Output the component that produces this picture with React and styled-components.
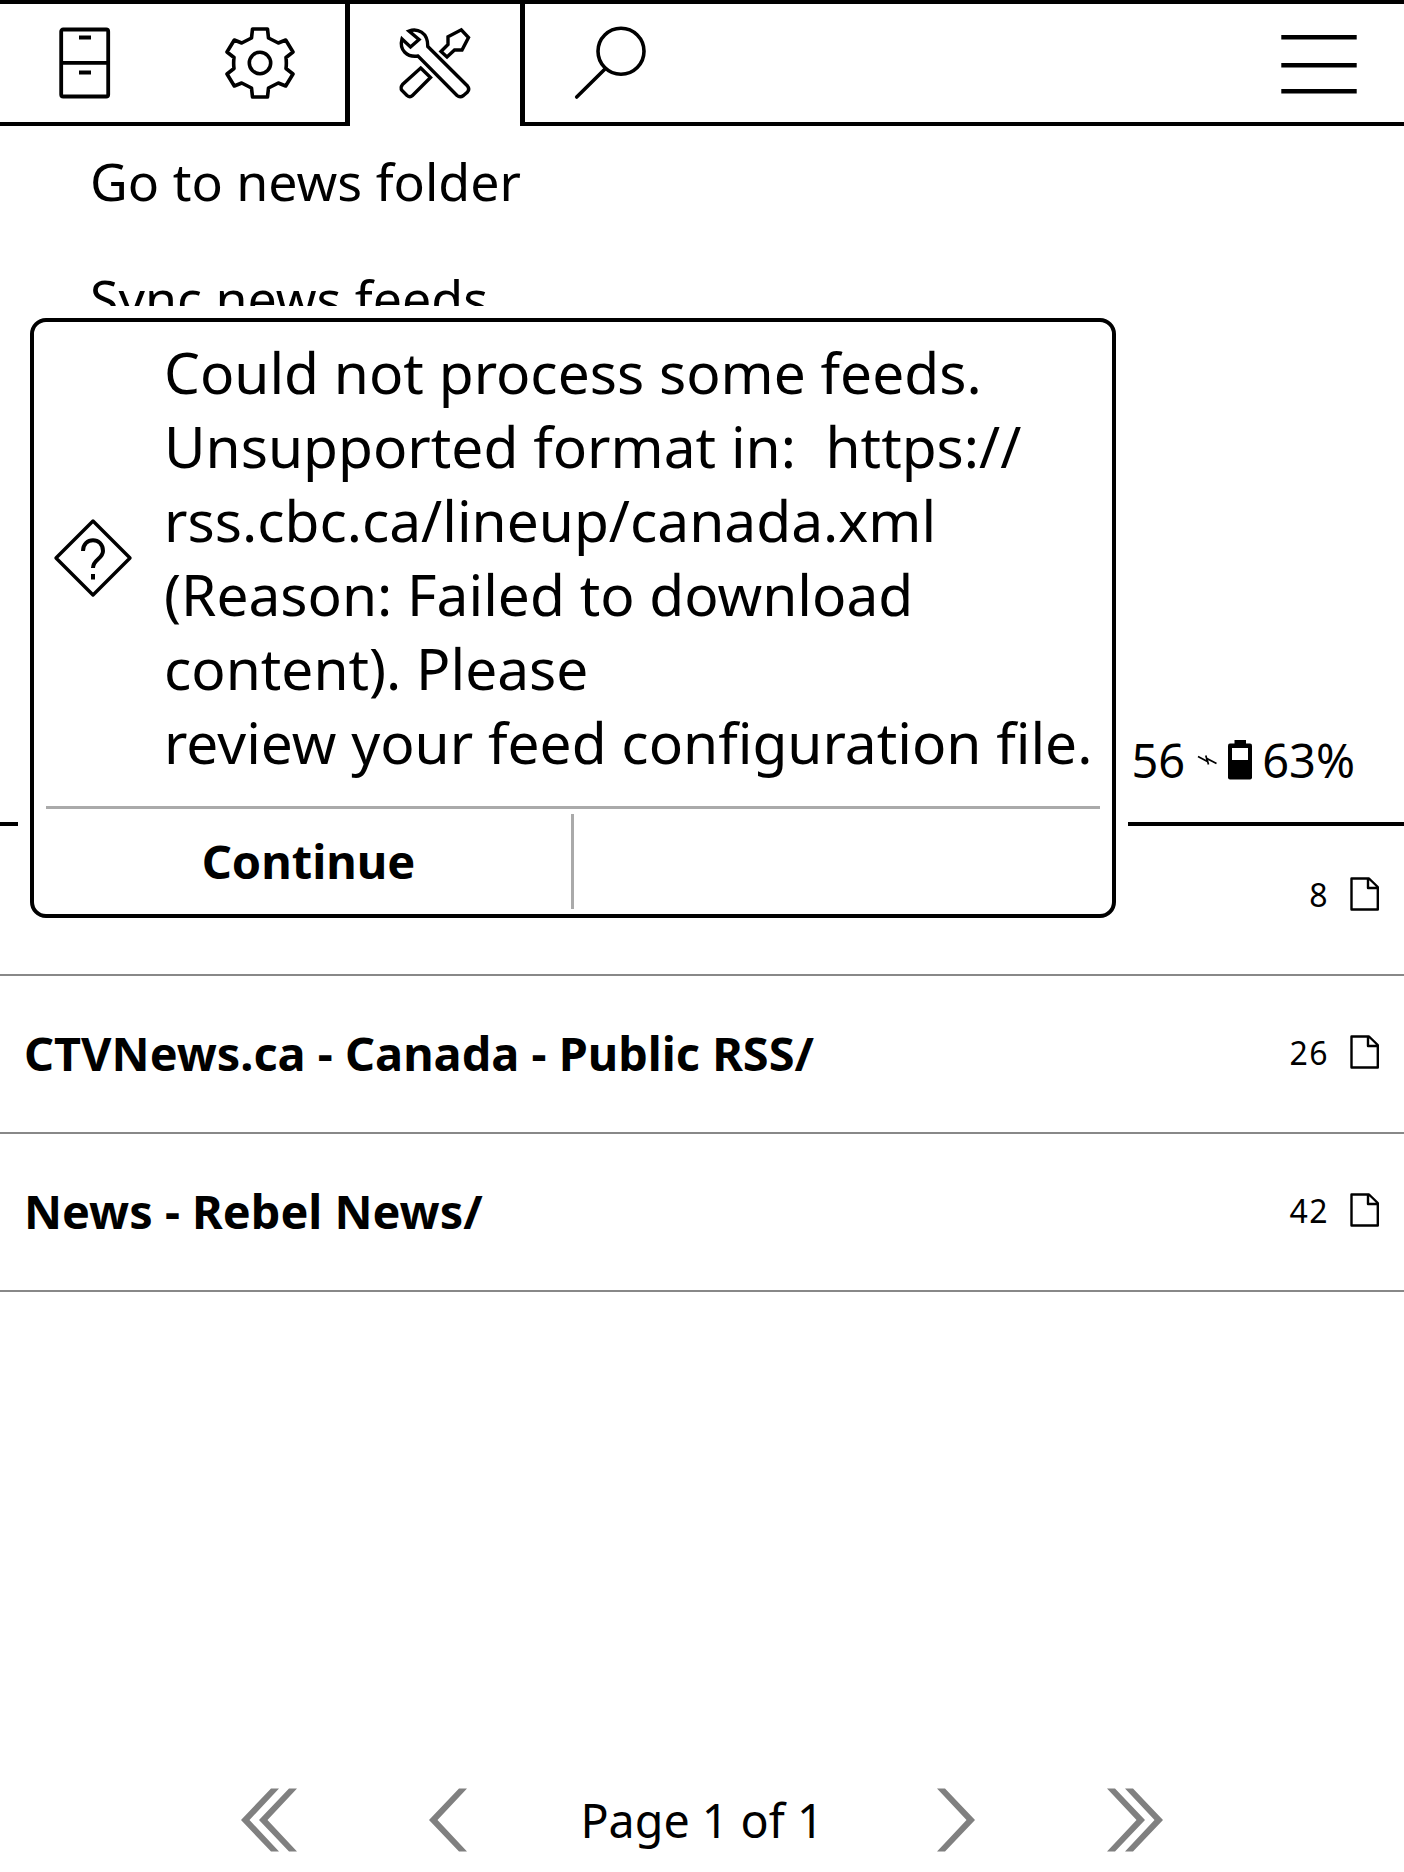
import React from "react";
import styled, { createGlobalStyle } from "styled-components";

const GlobalStyle = createGlobalStyle`
  * { box-sizing: border-box; }
  body { margin: 0; background: #fff; color: #000; font-family: "Noto Sans", sans-serif; }
`;

const Screen = styled.main`
  position: relative;
  display: flex;
  flex-direction: column;
  width: 1404px;
  height: 1872px;
  overflow: hidden;
  background: #fff;
`;

const TabBar = styled.nav`
  display: flex;
  flex: none;
  height: 126px;
  border-top: 4px solid #000;
`;

const Tab = styled.div`
  display: flex;
  flex: none;
  align-items: center;
  justify-content: center;
  width: ${(p) => p.$width}px;
  margin-left: ${(p) => (p.$active ? -5 : 0)}px;
  padding-bottom: ${(p) => (p.$active ? 4 : 0)}px;
  border: 0 solid #000;
  border-width: ${(p) => (p.$active ? "0 5px" : "0 0 4px")};
`;

const TabSpacer = styled.div`
  flex: 1;
  border-bottom: 4px solid #000;
`;

const Svg = styled.svg`
  display: block;
  flex: none;
  overflow: visible;
`;

const MenuList = styled.ul`
  flex: none;
  height: 696px;
  margin: 0;
  padding: 0;
  list-style: none;
`;

const MenuItem = styled.li`
  display: flex;
  align-items: center;
  height: 117px;
  padding: 0 0 6px 90px;
  font-size: 51.9px;
  line-height: 1;
`;

const MenuFooter = styled.li`
  display: flex;
  align-items: center;
  justify-content: flex-end;
  height: 120px;
  margin-top: 342px;
  padding: 0 49px 4px 0;
  font-size: 47px;
  line-height: 1;
`;

const StatusIcons = styled.span`
  display: flex;
  align-items: center;
  gap: 11px;
  margin: 0 10px 0 12px;
`;

const Files = styled.section`
  flex: none;
  border-top: 4px solid #000;
`;

const FileRow = styled.div`
  display: flex;
  align-items: center;
  height: 158px;
  padding: 0 25px 0 24px;
  border-bottom: 2px solid #888;

  &:first-child {
    margin-top: -8px;
  }
`;

const FileName = styled.span`
  flex: 1;
  padding-bottom: 2px;
  font-size: 46.85px;
  font-weight: 700;
  line-height: 1;
`;

const FileMeta = styled.span`
  display: flex;
  align-items: center;
  gap: 20px;
  padding-bottom: 4px;
`;

const FileCount = styled.span`
  padding-top: 2px;
  font-size: 32px;
  letter-spacing: 1.5px;
  line-height: 1;
`;

const Pager = styled.footer`
  display: flex;
  align-items: center;
  justify-content: space-between;
  width: 922px;
  height: 64px;
  margin: auto auto 20px;
`;

const PagerGroup = styled.div`
  display: flex;
  gap: 132px;
`;

const PageLabel = styled.span`
  font-size: 46.6px;
  line-height: 1;
  white-space: nowrap;
`;

const DialogMask = styled.div`
  position: absolute;
  left: 18px;
  top: 306px;
  width: 1110px;
  height: 624px;
  padding: 12px;
  background: #fff;
`;

const Dialog = styled.div`
  display: flex;
  flex-direction: column;
  height: 600px;
  padding: 0 12px;
  border: 4px solid #000;
  border-radius: 16px;
`;

const DialogBody = styled.div`
  display: flex;
  align-items: center;
  height: 484px;
  padding: 0 0 12px 8px;
`;

const Message = styled.p`
  margin: 0 0 2px 32px;
  font-size: 56.85px;
  line-height: 74px;
  white-space: pre;
`;

const ButtonRow = styled.div`
  display: flex;
  flex: 1;
  border-top: 3px solid #aaa;
`;

const DialogButton = styled.div`
  display: flex;
  align-items: center;
  justify-content: center;
  width: 525px;
  font-size: 47px;
  font-weight: 700;
  line-height: 1;
`;

const ButtonDivider = styled.div`
  width: 3px;
  margin: 5px 0;
  background: #aaa;
`;

const CabinetIcon = () => (
  <Svg width="72" height="72" viewBox="0 0 72 72" fill="none" stroke="#000" strokeWidth="3.8">
    <rect x="12.2" y="2.5" width="47" height="67" rx="2" />
    <path d="M12 35.8H60M30 10.5H42M30 45.5H42" />
  </Svg>
);

const GearIcon = () => (
  <Svg width="72" height="72" viewBox="0 0 72 72" fill="none" stroke="#000" strokeWidth="3.6" strokeLinejoin="round">
    <path d="M28.5 2H43.5L44.5 11L54.3 16L61.7 13L69 25L62 30.5Q62.7 36 62 41.5L69 47L61.7 59L54.3 56L44.5 61L43.5 70H28.5L27.5 61L17.7 56L10.3 59L3 47L10 41.5Q9.3 36 10 30.5L3 25L10.3 13L17.7 16L27.5 11Z" />
    <circle cx="36" cy="36" r="10.7" />
  </Svg>
);

const ToolsIcon = () => (
  <Svg width="72" height="72" viewBox="0 0 72 72" fill="none" stroke="#000" strokeWidth="3.4">
    <path d="M3 12L11.5 20L20 12.5L10 4C18 1 29 5 28.8 19.5L68.5 59Q71 62 68.5 65L64.5 68.5Q61 71 58 68.5L19 29C8 30.5 0 23 3 12Z" />
    <path d="M21.7 41L31.5 50.5L13.5 68.5Q11 71 8 68.5L3 63.5Q1 60.5 3.5 57.5ZM42 24.5L49 17.5V9.7L62.3 2.8L69.5 10.5L63 23H55.5L48 30Z" />
  </Svg>
);

const SearchIcon = () => (
  <Svg width="72" height="72" viewBox="0 0 72 72" fill="none" stroke="#000" strokeWidth="3.6" strokeLinecap="round">
    <circle cx="46" cy="24.3" r="23" />
    <path d="M1.7 70L30 42" />
  </Svg>
);

const MenuIcon = () => (
  <Svg width="76" height="72" viewBox="0 0 76 72" fill="none" stroke="#000" strokeWidth="4.6">
    <path d="M0.3 10.2H75.7M0.3 38.3H75.7M0.3 64.2H75.7" />
  </Svg>
);

const QuestionIcon = () => (
  <Svg width="78" height="78" viewBox="0 0 78 78" fill="none" stroke="#000" strokeWidth="3.4" strokeLinejoin="round">
    <path d="M39 2L76 39L39 76L2 39Z" />
    <path strokeWidth="4" d="M29 32C29 17.5 49 17.5 49 32C49 40 39 40 39 49" />
    <path strokeWidth="4" d="M39 55V60.5" />
  </Svg>
);

const BoltIcon = () => (
  <Svg width="20" height="10" viewBox="0 0 20 10" fill="none" stroke="#000" strokeWidth="1.7">
    <path d="M1 1.5L10.5 6.5L8.8 0.5M11.5 9.5L9.8 3.5L19.5 8.5" />
  </Svg>
);

const BatteryIcon = () => (
  <Svg width="24" height="40" viewBox="0 0 24 40">
    <rect x="6.5" y="0" width="11.5" height="6" />
    <rect x="0" y="3.5" width="24" height="36" rx="2" />
    <rect x="4" y="8" width="16" height="12" fill="#fff" />
  </Svg>
);

const FileIcon = () => (
  <Svg width="30" height="34" viewBox="0 0 30 34" fill="none" stroke="#000" strokeWidth="2.4" strokeLinejoin="round">
    <path d="M2.5 1.5H20L28.8 10V32.5H2.5ZM19 1.5V11H28.8" />
  </Svg>
);

const Chevron = ({ double, flip }) => (
  <Svg
    width={double ? 56 : 38}
    height="64"
    viewBox={double ? "0 0 56 64" : "0 0 38 64"}
    fill="#808080"
    transform={flip ? "scale(-1 1)" : undefined}
  >
    <path d="M0 32L30 0.4H38L8.5 32L38 63.6H30Z" />
    {double && <path d="M18 32L48 0.4H56L26.5 32L56 63.6H48Z" />}
  </Svg>
);

const MESSAGE = `Could not process some feeds.
Unsupported format in:  https://
rss.cbc.ca/lineup/canada.xml
(Reason: Failed to download
content). Please
review your feed configuration file.`;

const FILES = [
  { name: "", count: 8 },
  { name: "CTVNews.ca - Canada - Public RSS/", count: 26 },
  { name: "News - Rebel News/", count: 42 },
];

export default function App() {
  return (
    <>
      <GlobalStyle />
      <Screen>
        <TabBar>
          <Tab $width={170}><CabinetIcon /></Tab>
          <Tab $width={180}><GearIcon /></Tab>
          <Tab $width={180} $active><ToolsIcon /></Tab>
          <Tab $width={172}><SearchIcon /></Tab>
          <TabSpacer />
          <Tab $width={170}><MenuIcon /></Tab>
        </TabBar>
        <MenuList>
          <MenuItem>Go to news folder</MenuItem>
          <MenuItem>Sync news feeds</MenuItem>
          <MenuFooter>
            56
            <StatusIcons><BoltIcon /><BatteryIcon /></StatusIcons>
            63%
          </MenuFooter>
        </MenuList>
        <Files>
          {FILES.map((f) => (
            <FileRow key={f.count}>
              <FileName>{f.name}</FileName>
              <FileMeta>
                <FileCount>{f.count}</FileCount>
                <FileIcon />
              </FileMeta>
            </FileRow>
          ))}
        </Files>
        <Pager>
          <PagerGroup>
            <Chevron double />
            <Chevron />
          </PagerGroup>
          <PageLabel>Page 1 of 1</PageLabel>
          <PagerGroup>
            <Chevron flip />
            <Chevron double flip />
          </PagerGroup>
        </Pager>
        <DialogMask>
          <Dialog role="dialog">
            <DialogBody>
              <QuestionIcon />
              <Message>{MESSAGE}</Message>
            </DialogBody>
            <ButtonRow>
              <DialogButton>Continue</DialogButton>
              <ButtonDivider />
            </ButtonRow>
          </Dialog>
        </DialogMask>
      </Screen>
    </>
  );
}
